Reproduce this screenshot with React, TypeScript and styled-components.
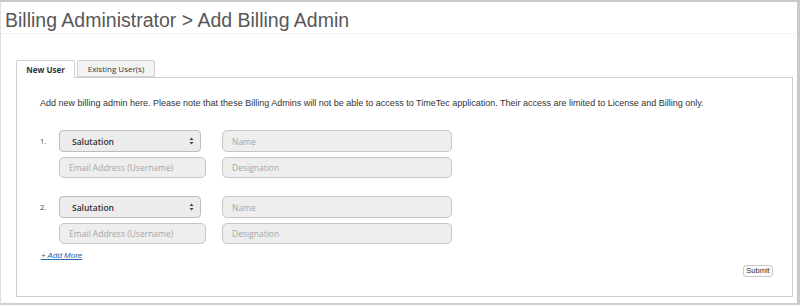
import React from "react";
import styled, { createGlobalStyle } from "styled-components";

const Global = createGlobalStyle`
  html, body { margin: 0; padding: 0; background: #fff; }
  body { font-family: "Liberation Sans", Arial, sans-serif; }
  * { box-sizing: border-box; }
`;

const Frame = styled.div`
  width: 800px;
  height: 305px;
  border-top: 2px solid #c9c9c9;
  border-right: 3px solid #c9c9c9;
  border-bottom: 2px solid #cfcfcf;
  border-left: 1px solid #dedede;
  display: flex;
  flex-direction: column;
`;

const Header = styled.h1`
  margin: 0;
  height: 32px;
  padding: 7px 0 0 4px;
  font-family: "Liberation Sans", Arial, sans-serif;
  font-weight: normal;
  font-size: 19.5px;
  line-height: 22px;
  color: #585858;
  border-bottom: 1px solid #f2f2f2;
`;

const Body = styled.div`
  padding: 26px 6px 0 15px;
`;

const TabBar = styled.div`
  display: flex;
  gap: 2px;
  height: 18px;
  position: relative;
  z-index: 1;
`;

const Tab = styled.div<{ $active?: boolean; $w: number }>`
  width: ${(p) => p.$w}px;
  height: ${(p) => (p.$active ? "18px" : "17px")};
  display: flex;
  align-items: center;
  justify-content: center;
  font-family: "Open Sans", "Liberation Sans", sans-serif;
  font-size: 8px;
  font-weight: ${(p) => (p.$active ? 700 : 400)};
  color: #333;
  background: ${(p) => (p.$active ? "#fff" : "#f3f3f3")};
  border: 1px solid #d0d0d0;
  border-bottom: ${(p) => (p.$active ? "none" : "1px solid #d0d0d0")};
  border-radius: 2px 2px 0 0;
`;

const Panel = styled.div`
  width: 777px;
  height: 220px;
  margin-top: -1px;
  border: 1px solid #cfcfcf;
  padding: 19px 19px 0 23px;
  display: flex;
  flex-direction: column;
`;

const Note = styled.p`
  margin: 0 0 21px 0;
  font-family: "Liberation Sans", Arial, sans-serif;
  font-size: 9px;
  line-height: 12px;
  color: #333;
`;

const Entry = styled.div<{ $last?: boolean }>`
  display: grid;
  grid-template-columns: 19px 147px 16px 230px;
  grid-template-rows: 22px 21px;
  row-gap: 5px;
  margin-bottom: ${(p) => (p.$last ? "7px" : "18px")};
`;

const Num = styled.div`
  grid-row: 1;
  grid-column: 1;
  font-family: "Open Sans", "Liberation Sans", sans-serif;
  font-size: 7.5px;
  color: #444;
  display: flex;
  align-items: center;
`;

const Select = styled.div`
  grid-row: 1;
  grid-column: 2;
  width: 142px;
  height: 22px;
  padding: 0 6px 0 12px;
  display: flex;
  align-items: center;
  justify-content: space-between;
  background: #ececec;
  border: 1px solid #bdbdbd;
  border-radius: 4px;
  font-family: "Open Sans", "Liberation Sans", sans-serif;
  font-size: 8.5px;
  font-weight: 600;
  color: #333;
`;

const Field = styled.div<{ $col: number; $row: number }>`
  grid-column: ${(p) => p.$col};
  grid-row: ${(p) => p.$row};
  padding-left: 9px;
  display: flex;
  align-items: center;
  background: #eeeeee;
  border: 1px solid #c6c6c6;
  border-radius: 5px;
  font-family: "Open Sans", "Liberation Sans", sans-serif;
  font-size: 8.5px;
  color: #a6a6a6;
`;

const Footer = styled.div`
  display: flex;
  flex-direction: column;
`;

const AddMore = styled.a`
  font-family: "Liberation Sans", Arial, sans-serif;
  font-size: 8px;
  line-height: 10px;
  font-style: italic;
  color: #2a62b0;
  text-decoration: underline;
  margin-left: 1px;
  cursor: pointer;
`;

const SubmitRow = styled.div`
  display: flex;
  justify-content: flex-end;
  margin-top: 4px;
`;

const Submit = styled.button`
  height: 12px;
  width: 30px;
  padding: 0;
  font-family: "Liberation Sans", Arial, sans-serif;
  font-size: 7.5px;
  line-height: 10px;
  color: #333;
  background: #fafafa;
  border: 1px solid #c8c8c8;
  border-radius: 3px;
`;

const Arrows = () => (
  <svg width="5" height="8" viewBox="0 0 5 8">
    <path d="M2.5 0.5 L4.5 3 L0.5 3 Z" fill="#444" />
    <path d="M2.5 7.5 L4.5 5 L0.5 5 Z" fill="#444" />
  </svg>
);

const entries = [1, 2];

export default function App() {
  return (
    <>
      <Global />
      <Frame>
        <Header>Billing Administrator &gt; Add Billing Admin</Header>
        <Body>
          <TabBar>
            <Tab $active $w={59}>New User</Tab>
            <Tab $w={78}>Existing User(s)</Tab>
          </TabBar>
          <Panel>
            <Note>
              Add new billing admin here. Please note that these Billing Admins will not be able to access to TimeTec application. Their access are limited to License and Billing only.
            </Note>
            {entries.map((n, i) => (
              <Entry key={n} $last={i === entries.length - 1}>
                <Num>{n}.</Num>
                <Select>
                  <span>Salutation</span>
                  <Arrows />
                </Select>
                <Field $col={4} $row={1}>Name</Field>
                <Field $col={2} $row={2}>Email Address (Username)</Field>
                <Field $col={4} $row={2}>Designation</Field>
              </Entry>
            ))}
            <Footer>
              <AddMore>+ Add More</AddMore>
              <SubmitRow>
                <Submit>Submit</Submit>
              </SubmitRow>
            </Footer>
          </Panel>
        </Body>
      </Frame>
    </>
  );
}
